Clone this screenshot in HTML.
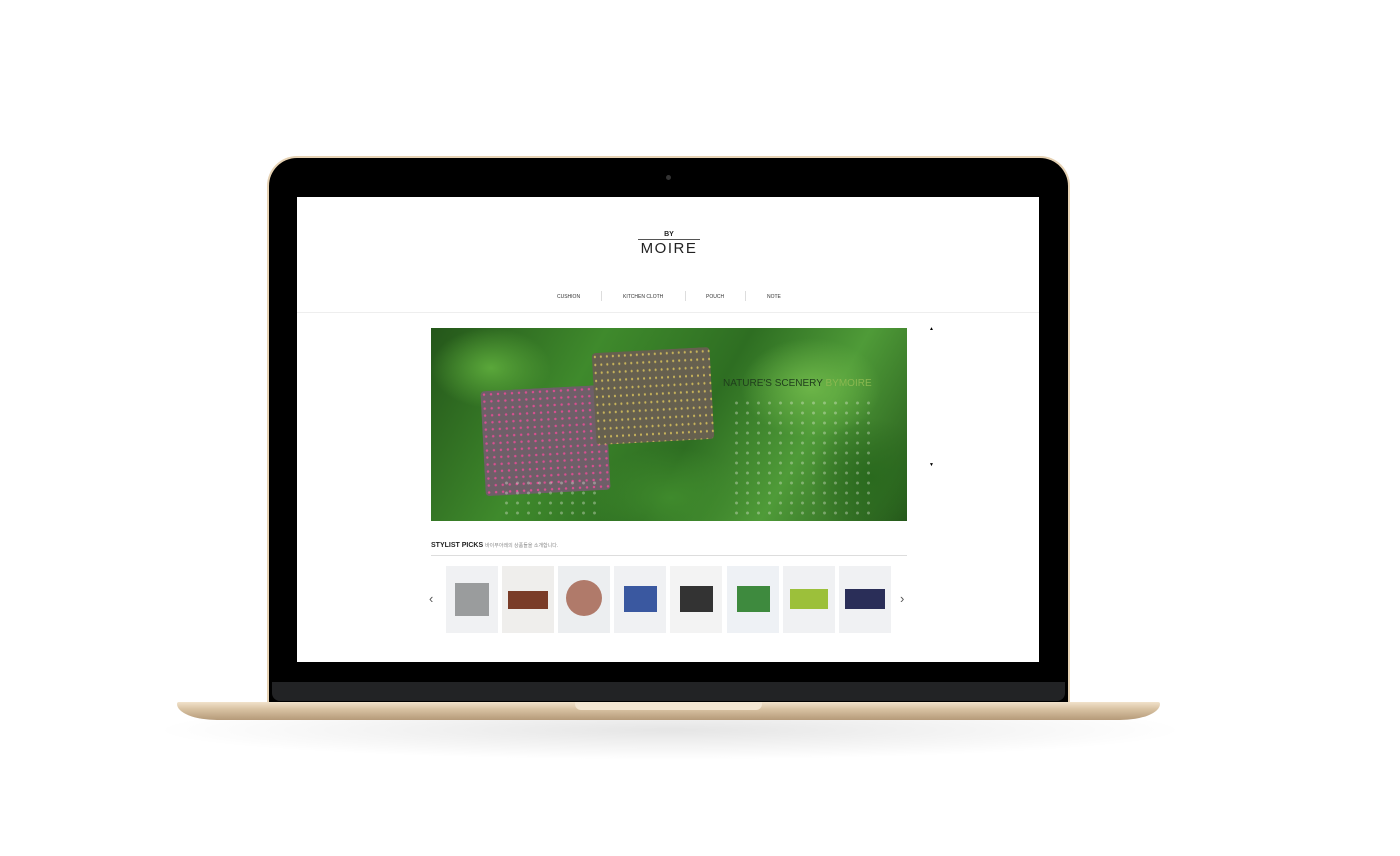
<!DOCTYPE html>
<html><head><meta charset="utf-8"><style>
*{margin:0;padding:0;box-sizing:border-box}
body{width:1400px;height:856px;background:#fff;position:relative;overflow:hidden;font-family:"Liberation Sans","Noto Sans CJK KR",sans-serif}
.abs{position:absolute}
.shadow{left:150px;top:700px;width:1040px;height:60px;background:radial-gradient(ellipse at center,rgba(0,0,0,.10),rgba(0,0,0,0) 70%)}
.lid{left:267px;top:156px;width:803px;height:548px;background:#000;border-radius:30px 30px 0 0;border:2px solid #e6d2b4;border-bottom:none}
.chin{left:272px;top:682px;width:793px;height:19px;background:#222325;border-radius:0 0 8px 8px}
.screen{left:297px;top:197px;width:742px;height:465px;background:#fff}
.base{left:177px;top:702px;width:983px;height:18px;background:linear-gradient(#f1e2cb,#d8c2a2 40%,#b59a79);border-radius:2px 2px 40px 40px/2px 2px 16px 16px}
.notch{left:575px;top:702px;width:187px;height:8px;background:#f3e6d2;border-radius:0 0 6px 6px}
.cam{left:666px;top:175px;width:5px;height:5px;border-radius:50%;background:#333}
.nav a{position:absolute;font-size:5px;color:#333;top:294px}
.sep{position:absolute;top:291px;width:1px;height:10px;background:#ddd}
.hero{left:431px;top:328px;width:476px;height:193px;overflow:hidden;background:
radial-gradient(ellipse 60px 40px at 60px 40px,#5aa73a,transparent),
radial-gradient(ellipse 70px 50px at 380px 60px,#6cb548,transparent),
radial-gradient(ellipse 80px 50px at 240px 170px,#3f8a2c,transparent),
radial-gradient(ellipse 60px 60px at 440px 150px,#2a6a1e,transparent),
linear-gradient(120deg,#24561a,#3f8a2c 30%,#2e6e22 55%,#4f9b38 75%,#24561a)}
.thumb{position:absolute;top:566px;width:52px;height:67px;background:#f0f1f3}
.thumb div{position:absolute}
</style></head><body>
<div class="abs shadow"></div>
<div class="abs lid"></div>
<div class="abs cam"></div>
<div class="abs chin"></div>
<div class="abs base"></div>
<div class="abs notch"></div>
<div class="abs screen"></div>
<div class="abs" style="left:638px;top:231px;width:62px;text-align:center;font-size:7px;font-weight:bold;color:#222">BY</div>
<div class="abs" style="left:638px;top:239px;width:62px;height:1px;background:#555"></div>
<div class="abs" style="left:634px;top:240px;width:70px;text-align:center;font-size:15px;letter-spacing:1.5px;color:#222">MOIRE</div>
<div class="nav">
<a style="left:557px">CUSHION</a><span class="sep" style="left:601px"></span>
<a style="left:623px">KITCHEN CLOTH</a><span class="sep" style="left:685px"></span>
<a style="left:706px">POUCH</a><span class="sep" style="left:745px"></span>
<a style="left:767px">NOTE</a>
</div>
<div class="abs" style="left:297px;top:312px;width:742px;height:1px;background:#eee"></div>
<div class="abs hero">
 <div class="abs" style="left:52px;top:60px;width:125px;height:105px;background:#6e5f68;transform:rotate(-3deg);border-radius:4px;background-image:radial-gradient(#d84f90 22%,transparent 28%);background-size:7px 7px"></div>
 <div class="abs" style="left:163px;top:22px;width:118px;height:92px;background:#66604f;transform:rotate(-3deg);border-radius:4px;background-image:radial-gradient(#c8b45a 20%,transparent 26%);background-size:6px 8px"></div>
 <div class="abs" style="left:292px;top:50px;font-size:10px;color:#1f3d1c">NATURE'S SCENERY <span style="color:#8ab850">BYMOIRE</span></div>
 <div class="abs" style="left:300px;top:70px;width:140px;height:120px;background:radial-gradient(circle,rgba(240,240,230,.35) 1.2px,transparent 1.8px);background-size:11px 10px"></div>
 <div class="abs" style="left:70px;top:150px;width:100px;height:43px;background:radial-gradient(circle,rgba(240,240,230,.35) 1.2px,transparent 1.8px);background-size:11px 10px"></div>
</div>
<div class="abs" style="left:929px;top:326px;font-size:5px">▲</div>
<div class="abs" style="left:929px;top:462px;font-size:5px">▼</div>
<div class="abs" style="left:431px;top:542px;font-size:7px;font-weight:bold;color:#222">STYLIST PICKS <span style="font-weight:normal;font-size:5px;color:#888">바이무아레의 상품들을 소개합니다.</span></div>
<div class="abs" style="left:431px;top:555px;width:476px;height:1px;background:#ddd"></div>
<div class="abs" style="left:429px;top:591px;font-size:13px;color:#555">‹</div>
<div class="abs" style="left:900px;top:591px;font-size:13px;color:#555">›</div>
<div class="thumb" style="left:446px"><div style="left:9px;top:17px;width:34px;height:33px;background:#9a9c9d"></div></div>
<div class="thumb" style="left:502px;background:#efeeec"><div style="left:6px;top:25px;width:40px;height:18px;background:#7a3c28"></div></div>
<div class="thumb" style="left:558px;background:#eceef0"><div style="left:8px;top:14px;width:36px;height:36px;border-radius:50%;background:#b07a6a"></div></div>
<div class="thumb" style="left:614px"><div style="left:10px;top:20px;width:33px;height:26px;background:#3a58a0"></div></div>
<div class="thumb" style="left:670px;background:#f3f3f3"><div style="left:10px;top:20px;width:33px;height:26px;background:#333"></div></div>
<div class="thumb" style="left:727px;background:#eef1f5"><div style="left:10px;top:20px;width:33px;height:26px;background:#3e8a3e"></div></div>
<div class="thumb" style="left:783px"><div style="left:7px;top:23px;width:38px;height:20px;background:#9cc03a"></div></div>
<div class="thumb" style="left:839px"><div style="left:6px;top:23px;width:40px;height:20px;background:#2a2e58"></div></div>
</body></html>
